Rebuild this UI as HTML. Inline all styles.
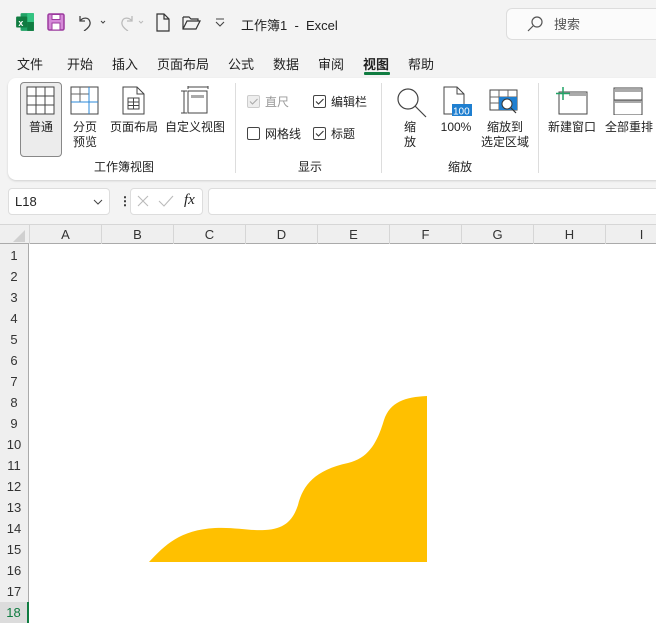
<!DOCTYPE html>
<html><head><meta charset="utf-8"><style>
*{margin:0;padding:0;box-sizing:border-box}
body{width:656px;height:623px;overflow:hidden;background:#f3f3f3;position:relative;font-family:"Liberation Sans","Noto Sans CJK SC",sans-serif;font-size:12px;color:#222}
.a{position:absolute;white-space:nowrap}
.tab{position:absolute;top:54px;font-size:13px}
.lbl{position:absolute;font-size:12px;text-align:center;line-height:15px}
.cb{position:absolute;width:13px;height:13px;border:1px solid #444;border-radius:2px;background:#fff}
.col{position:absolute;top:225px;height:19px;width:72px;border-left:1px solid #d6d6d6;text-align:center;font-size:13px;line-height:19px;color:#333}
.row{position:absolute;left:0;width:28px;height:21px;font-size:13px;line-height:21px;text-align:center;color:#333}
</style></head><body>
<!-- title bar -->
<svg class="a" style="left:15px;top:12px" width="20" height="20" viewBox="0 0 18 18"><rect x="5" y="1" width="12" height="16" rx="1" fill="#21a366"/><rect x="11" y="1" width="6" height="8" fill="#33c481"/><rect x="11" y="9" width="6" height="8" fill="#107c41"/><rect x="1" y="4" width="10" height="10" rx="1" fill="#107c41"/><text x="3" y="12.5" font-size="8" fill="#fff" font-family="Liberation Sans" font-weight="bold">x</text></svg>
<svg class="a" style="left:47px;top:13px" width="18" height="18" viewBox="0 0 18 18"><rect x="1" y="1" width="16" height="16" rx="1.5" fill="#d58ad8" stroke="#9b3a9e" stroke-width="1.5"/><rect x="5" y="1.5" width="8" height="5" fill="#fff" stroke="#9b3a9e"/><rect x="5" y="10" width="8" height="7" fill="#fff" stroke="#9b3a9e"/></svg>
<svg class="a" style="left:76px;top:13px" width="32" height="18"><path d="M4 3v5h5M4 8c3-4 9-4 10 1c1 4-3 7-6 9" fill="none" stroke="#444" stroke-width="1.3"/><path d="M25 8l2 2 2-2" fill="none" stroke="#444"/></svg>
<svg class="a" style="left:116px;top:13px" width="32" height="18"><path d="M16 3v5h-5M16 8c-3-4-9-4-10 1c-1 4 3 7 6 9" fill="none" stroke="#bbb" stroke-width="1.3"/><path d="M23 8l2 2 2-2" fill="none" stroke="#bbb"/></svg>
<svg class="a" style="left:155px;top:13px" width="16" height="20"><path d="M2 1h7l5 5v12H2z M9 1v5h5" fill="none" stroke="#333" stroke-width="1.2"/></svg>
<svg class="a" style="left:182px;top:15px" width="20" height="16"><path d="M1 2h6l2 2h7v2M1 2v12h13l4-8H5L1 14" fill="none" stroke="#333" stroke-width="1.2"/></svg>
<svg class="a" style="left:214px;top:17px" width="12" height="10"><path d="M2 2h8M2 5l4 4 4-4" fill="none" stroke="#444" stroke-width="1.1"/></svg>
<div class="a" style="left:241px;top:15px;font-size:13px">工作簿1&nbsp; - &nbsp;Excel</div>
<div class="a" style="left:506px;top:8px;width:160px;height:32px;background:#fbfbfb;border:1px solid #ddd;border-radius:6px"></div>
<svg class="a" style="left:526px;top:15px" width="18" height="18"><circle cx="11" cy="7" r="5" fill="none" stroke="#555" stroke-width="1.2"/><path d="M7 11l-5 5" stroke="#555" stroke-width="1.2"/></svg>
<div class="a" style="left:554px;top:14px;font-size:13px;color:#555">搜索</div>
<!-- tabs -->
<div class="tab" style="left:17px">文件</div><div class="tab" style="left:67px">开始</div><div class="tab" style="left:112px">插入</div><div class="tab" style="left:157px">页面布局</div><div class="tab" style="left:228px">公式</div><div class="tab" style="left:273px">数据</div><div class="tab" style="left:318px">审阅</div><div class="tab" style="left:363px;font-weight:bold">视图</div><div class="tab" style="left:408px">帮助</div>
<div class="a" style="left:364px;top:72px;width:26px;height:3px;background:#107c41;border-radius:1px"></div>
<!-- ribbon -->
<div class="a" style="left:8px;top:78px;width:660px;height:102px;background:#fff;border-radius:8px;box-shadow:0 1px 2px rgba(0,0,0,.15)"></div>
<div class="a" style="left:20px;top:82px;width:42px;height:75px;background:#ececec;border:1px solid #888;border-radius:4px"></div>
<svg class="a" style="left:26px;top:86px" width="30" height="30"><rect x="1" y="1" width="27" height="27" fill="#fff" stroke="#444"/><path d="M10 1v27M19 1v27M1 10h27M1 19h27" stroke="#444"/></svg>
<div class="lbl" style="left:20px;top:120px;width:42px">普通</div>
<svg class="a" style="left:70px;top:86px" width="30" height="30"><rect x="1" y="1" width="27" height="27" fill="#fff" stroke="#444"/><path d="M10 1v15M1 8h18" stroke="#666"/><path d="M19 1v27M1 16h27" stroke="#2b88d8"/></svg>
<div class="lbl" style="left:70px;top:120px;width:30px">分页<br>预览</div>
<svg class="a" style="left:122px;top:86px" width="24" height="30"><path d="M1 1h14l7 7v20H1z M15 1v7h7" fill="#fff" stroke="#444"/><rect x="6" y="12" width="11" height="11" fill="none" stroke="#444"/><path d="M11.5 12v11M6 16h11M6 19.5h11" stroke="#444"/></svg>
<div class="lbl" style="left:108px;top:120px;width:52px">页面布局</div>
<svg class="a" style="left:180px;top:86px" width="30" height="30"><path d="M8 1h20M8 0v3M28 0v3M1 5h6M1 27h6M4 5v22" stroke="#444" fill="none"/><rect x="8" y="5" width="19" height="22" fill="#fff" stroke="#444"/><rect x="11" y="9" width="13" height="3" fill="#aaa"/></svg>
<div class="lbl" style="left:163px;top:120px;width:64px">自定义视图</div>
<div class="lbl" style="left:20px;top:160px;width:208px">工作簿视图</div>
<div class="a" style="left:235px;top:83px;width:1px;height:90px;background:#ddd"></div>
<div class="cb" style="left:247px;top:95px;border-color:#ccc;background:#eee"></div>
<svg class="a" style="left:247px;top:95px" width="13" height="13"><path d="M3 6.5l2.5 2.5 5-5" fill="none" stroke="#aaa" stroke-width="1.1"/></svg>
<div class="a" style="left:265px;top:93px;color:#999">直尺</div>
<div class="cb" style="left:247px;top:127px"></div><div class="a" style="left:265px;top:125px">网格线</div>
<div class="cb" style="left:313px;top:95px"></div>
<svg class="a" style="left:313px;top:95px" width="13" height="13"><path d="M3 6.5l2.5 2.5 5-5" fill="none" stroke="#333" stroke-width="1.1"/></svg>
<div class="a" style="left:331px;top:93px">编辑栏</div>
<div class="cb" style="left:313px;top:127px"></div>
<svg class="a" style="left:313px;top:127px" width="13" height="13"><path d="M3 6.5l2.5 2.5 5-5" fill="none" stroke="#333" stroke-width="1.1"/></svg>
<div class="a" style="left:331px;top:125px">标题</div>
<div class="lbl" style="left:240px;top:160px;width:140px">显示</div>
<div class="a" style="left:381px;top:83px;width:1px;height:90px;background:#ddd"></div>
<svg class="a" style="left:395px;top:86px" width="34" height="34"><circle cx="13" cy="13" r="10" fill="none" stroke="#444" stroke-width="1.2"/><path d="M20 20l11 11" stroke="#444" stroke-width="1.2"/></svg>
<div class="lbl" style="left:398px;top:120px;width:24px">缩<br>放</div>
<svg class="a" style="left:443px;top:86px" width="30" height="34"><path d="M1 1h13l7 7v20H1z M14 1v7h7" fill="#fff" stroke="#444"/><rect x="9" y="18" width="20" height="12" fill="#1f7fd0"/><text x="10" y="28.5" font-size="10" fill="#fff" font-family="Liberation Sans">100</text></svg>
<div class="lbl" style="left:436px;top:120px;width:40px">100%</div>
<svg class="a" style="left:489px;top:89px" width="32" height="30"><rect x="1" y="1" width="27" height="20" fill="#fff" stroke="#444"/><path d="M10 1v20M19 1v20M1 8h27M1 14h27" stroke="#666"/><rect x="10" y="8" width="18" height="13" fill="#1f7fd0"/><circle cx="18" cy="15" r="5" fill="#fff" stroke="#333"/><path d="M22 19l5 5" stroke="#333" stroke-width="1.2"/></svg>
<div class="lbl" style="left:477px;top:120px;width:56px">缩放到<br>选定区域</div>
<div class="lbl" style="left:390px;top:160px;width:140px">缩放</div>
<div class="a" style="left:538px;top:83px;width:1px;height:90px;background:#ddd"></div>
<svg class="a" style="left:555px;top:87px" width="34" height="28"><rect x="4" y="5" width="28" height="22" fill="#fff" stroke="#444"/><rect x="14" y="6" width="17" height="3" fill="#aaa"/><path d="M8 0v13M1 6.5h14" stroke="#21a366" stroke-width="1.5"/></svg>
<div class="lbl" style="left:546px;top:120px;width:52px">新建窗口</div>
<svg class="a" style="left:613px;top:87px" width="30" height="28"><rect x="1" y="1" width="28" height="27" fill="#fff" stroke="#444"/><rect x="2" y="2" width="26" height="3" fill="#aaa"/><rect x="2" y="13" width="26" height="3" fill="#aaa"/><path d="M1 13h28" stroke="#444"/></svg>
<div class="lbl" style="left:602px;top:120px;width:54px">全部重排</div>
<!-- formula bar -->
<div class="a" style="left:8px;top:188px;width:102px;height:27px;background:#fff;border:1px solid #ddd;border-radius:4px"></div>
<div class="a" style="left:15px;top:194px;font-size:13px">L18</div>
<svg class="a" style="left:93px;top:198px" width="10" height="8"><path d="M1 2l4 4 4-4" fill="none" stroke="#444"/></svg>
<div class="a" style="left:119px;top:194px;font-size:12px;font-weight:bold">⋮</div>
<div class="a" style="left:130px;top:188px;width:73px;height:27px;background:#fff;border:1px solid #ddd;border-radius:4px"></div>
<svg class="a" style="left:136px;top:194px" width="14" height="14"><path d="M2 2l10 10M12 2L2 12" stroke="#bbb" stroke-width="1.1"/></svg>
<svg class="a" style="left:158px;top:194px" width="16" height="14"><path d="M1 7l5 5 9-10" fill="none" stroke="#bbb" stroke-width="1.1"/></svg>
<div class="a" style="left:184px;top:192px;font-family:'Liberation Serif',serif;font-style:italic;font-size:15px">fx</div>
<div class="a" style="left:208px;top:188px;width:460px;height:27px;background:#fff;border:1px solid #ddd;border-radius:4px"></div>
<!-- grid -->
<div class="a" style="left:0;top:224px;width:656px;height:20px;background:#efefef;border-top:1px solid #d6d6d6;border-bottom:1px solid #aaa"></div>
<svg class="a" style="left:12px;top:230px" width="14" height="12"><path d="M13 0v12H1z" fill="#d0d0d0"/></svg>
<div class="col" style="left:29px">A</div><div class="col" style="left:101px">B</div><div class="col" style="left:173px">C</div><div class="col" style="left:245px">D</div><div class="col" style="left:317px">E</div><div class="col" style="left:389px">F</div><div class="col" style="left:461px">G</div><div class="col" style="left:533px">H</div><div class="col" style="left:605px">I</div>
<div class="a" style="left:0;top:244px;width:29px;height:379px;background:#efefef;border-right:1px solid #aaa"></div>
<div class="a" style="left:29px;top:244px;width:627px;height:379px;background:#fff"></div>
<div class="row" style="top:245px">1</div><div class="row" style="top:266px">2</div><div class="row" style="top:287px">3</div><div class="row" style="top:308px">4</div><div class="row" style="top:329px">5</div><div class="row" style="top:350px">6</div><div class="row" style="top:371px">7</div><div class="row" style="top:392px">8</div><div class="row" style="top:413px">9</div><div class="row" style="top:434px">10</div><div class="row" style="top:455px">11</div><div class="row" style="top:476px">12</div><div class="row" style="top:497px">13</div><div class="row" style="top:518px">14</div><div class="row" style="top:539px">15</div><div class="row" style="top:560px">16</div><div class="row" style="top:581px">17</div>
<div class="row" style="top:602px;background:#dcdcdc;color:#107c41;border-right:2px solid #107c41;width:29px">18</div>
<svg class="a" style="left:0;top:0" width="656" height="623"><path d="M149 562C165 545 180 530 215 528C235 527 250 531 265 530C285 529 293 520 298 505C303 485 315 470 348 463C370 458 378 440 384 420C390 402 405 397 427 396L427 562Z" fill="#ffc000"/></svg>
</body></html>
